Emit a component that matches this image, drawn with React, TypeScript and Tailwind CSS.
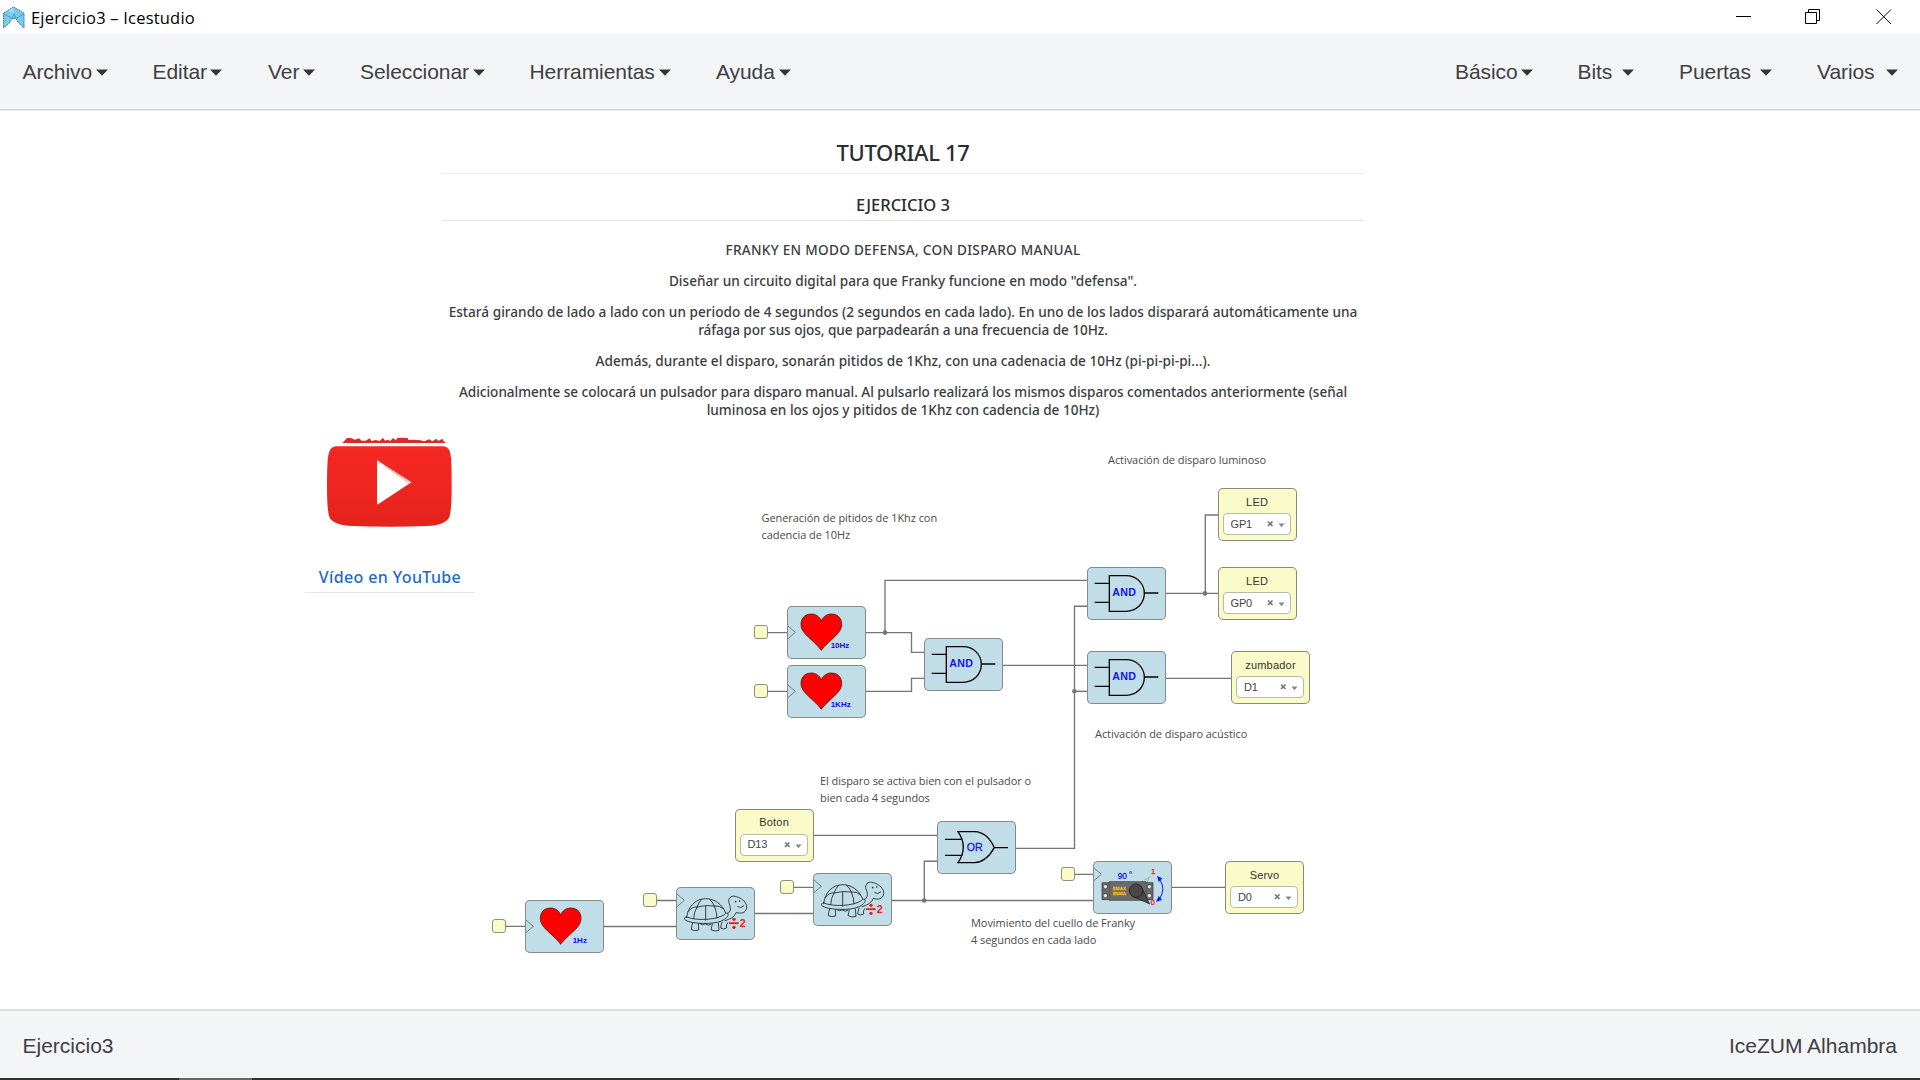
import type { ReactNode } from "react";

/* The canvas starts below the title bar and the menu bar. */
const CANVAS_TOP = 110;

function at(x: number, y: number) {
  return { left: x, top: y - CANVAS_TOP };
}

function Caret() {
  return (
    <svg className="mt-px h-[7px] w-3 shrink-0" viewBox="0 0 12 7">
      <path d="M0 0.5H12L6 6.7Z" fill="#333537" />
    </svg>
  );
}

function MenuItem({ label, className }: { label: string; className: string }) {
  return (
    <button className={`flex shrink-0 items-center justify-between whitespace-nowrap ${className}`}>
      <span>{label}</span>
      <Caret />
    </button>
  );
}

function TitleBar() {
  return (
    <header className="flex h-[34px] shrink-0 items-center bg-white pl-[3px]">
      <svg className="mt-[1px] h-[23px] w-[22px]" viewBox="0 0 23 24">
        <path d="M0.5 7.5 L11 1 L22 7.5 V23 L16.5 18 L13.5 13 H9.5 L6.5 18 L0.5 23Z" fill="#7ccbee" stroke="#2c6f8e" strokeWidth="0.9" strokeDasharray="2 0.6" />
        <path d="M0.5 8 L9.5 13 L11.5 8 L13.5 13 L22 8" fill="none" stroke="#4496ba" strokeWidth="0.9" />
        <path d="M11 1.5 L5.5 5 L11.5 8Z" fill="#9cdcf6" />
      </svg>
      <span className="ml-[6px] mt-[2px] font-['Open_Sans'] text-[16.5px] tracking-[0.2px] text-black">Ejercicio3 – Icestudio</span>
      <svg className="ml-auto mr-7 h-4 w-[157px]" viewBox="0 0 157 16" fill="none" stroke="#000" strokeWidth="1">
        <path d="M1 7.5H16" />
        <path d="M70.500 3.500H81.500V14.500H70.500ZM73.500 3.500V0.500H84.500V11.500H81.500" />
        <path d="M141.500 0.500L156 15M156 0.500L141.500 15" />
      </svg>
    </header>
  );
}

function MenuBar() {
  return (
    <nav className="flex h-[76px] shrink-0 items-center border-b border-[#d3d6d9] bg-[#f4f5f7] pl-[22.5px] pr-[22px] text-[21px] tracking-[-0.07px] text-[#3d4043] shadow-[0_1px_0_#e9eaeb]">
      <MenuItem label="Archivo" className="w-[85.5px]" />
      <MenuItem label="Editar" className="ml-[44.5px] w-[69.5px]" />
      <MenuItem label="Ver" className="ml-[46px] w-[47px]" />
      <MenuItem label="Seleccionar" className="ml-[45px] w-[125px]" />
      <MenuItem label="Herramientas" className="ml-[44.5px] w-[141px]" />
      <MenuItem label="Ayuda" className="ml-[45.5px] w-[74.5px]" />
      <div className="ml-auto flex">
        <MenuItem label="Básico" className="w-[78px]" />
        <MenuItem label="Bits" className="ml-[44.5px] w-[56.5px]" />
        <MenuItem label="Puertas" className="ml-[45px] w-[93px]" />
        <MenuItem label="Varios" className="ml-[45px] w-[81px]" />
      </div>
    </nav>
  );
}

function Info() {
  return (
    <section className="absolute left-[442px] top-[28px] flex w-[922px] flex-col text-center font-['Noto_Sans'] text-[13.6px] font-medium leading-[18px] text-[#3a3d3f]">
      <h1 className="h-[36px] border-b border-[#ededed] text-[22px] leading-[28px] tracking-[-0.3px] text-[#2a2c2e]">TUTORIAL 17</h1>
      <h2 className="mt-[19px] h-[28px] border-b border-[#e6e6e6] text-[16.5px] leading-[23px] text-[#2a2c2e]">EJERCICIO 3</h2>
      <p className="mt-[20px] tracking-[0.28px]">FRANKY EN MODO DEFENSA, CON DISPARO MANUAL</p>
      <p className="mt-[13px] tracking-[0.02px]">Diseñar un circuito digital para que Franky funcione en modo "defensa".</p>
      <p className="mt-[13px] tracking-[0.018px]">
        Estará girando de lado a lado con un periodo de 4 segundos (2 segundos en cada lado). En uno de los lados disparará automáticamente una
        <br />
        <span className="tracking-[-0.06px]">ráfaga por sus ojos, que parpadearán a una frecuencia de 10Hz.</span>
      </p>
      <p className="mt-[13px] tracking-[0.02px]">Además, durante el disparo, sonarán pitidos de 1Khz, con una cadenacia de 10Hz (pi-pi-pi-pi...).</p>
      <p className="mt-[13px]">
        <span className="tracking-[-0.038px]">
          Adicionalmente se colocará un pulsador para disparo manual. Al pulsarlo realizará los mismos disparos comentados anteriormente (señal
        </span>
        <br />
        <span className="tracking-[-0.01px]">luminosa en los ojos y pitidos de 1Khz con cadencia de 10Hz)</span>
      </p>
    </section>
  );
}

function VideoLink() {
  return (
    <section className="absolute left-[305px] top-[325px] flex w-[170px] flex-col items-center border-b border-[#e6e6e6]">
      <svg className="h-[94px] w-[126px]" viewBox="0 0 378 282">
        <defs>
          <linearGradient id="yt" x1="0" y1="0" x2="0" y2="1">
            <stop offset="0" stopColor="#f72723" />
            <stop offset="1" stopColor="#e4231d" />
          </linearGradient>
        </defs>
        <path d="M46 24 L60 9 L72 9 L84 14 L96 10 L104 17 L116 17 L128 10 L134 18 L146 15 L158 18 L168 8 L174 17 L182 14 L190 18 L198 9 L206 16 L212 8 L242 9 L244 15 L262 14 L280 16 L292 19 L306 13 L316 19 L328 11 L334 18 L346 11 L352 21 L358 24Z" fill="#dc2a27" />
        <path d="M26 34 H350 Q368 36 371 60 Q374 80 374 155 Q374 230 366 248 Q354 270 300 273 Q190 278 76 273 Q20 270 8 248 Q0 230 0 155 Q0 80 4 60 Q8 36 26 34Z" fill="url(#yt)" />
        <path d="M150 75 L254 142 L244 147 L188 103Z" fill="#f0c6c3" />
        <path d="M150 75 L242 144 L253 142 L150 210Z" fill="#fff" />
      </svg>
      <a className="mt-[35px] h-[28px] font-['Noto_Sans'] text-[16px] font-medium leading-[27px] tracking-[0.38px] text-[#1a6cc4]">Vídeo en YouTube</a>
    </section>
  );
}

/* Wires between ports, as SVG paths in window coordinates. */
const WIRES = [
  "M767 632.600H787M767 691.300H787M656 900.500H677M794 887.300H813M506 926.400H525M1075 874.300H1093",
  "M866 632.600H911.500V652.400H924",
  "M885 632.600V580.300H1087",
  "M866 691.300H911.500V678.300H924",
  "M1002 665.300H1087",
  "M1087 606.200H1074.500V848.300H1016",
  "M1074.500 691.300H1087",
  "M1166 593.400H1218",
  "M1205.300 593.400V515H1218",
  "M1166 678.400H1231",
  "M813 835.300H937",
  "M937 861.200H924.300V900.500",
  "M891 900.500H1093",
  "M755 913.500H813",
  "M603 926.500H676",
  "M1172 887.400H1225",
];
const JUNCTIONS = [
  [885, 632.6],
  [1205, 593.4],
  [1074.4, 691.3],
  [924.2, 900.5],
];

function Wires() {
  return (
    <svg className="absolute inset-0 h-[899px] w-[1920px]" viewBox="0 110 1920 899">
      {WIRES.map((d) => (
        <path key={d} d={d} fill="none" stroke="#757575" strokeWidth="1.35" />
      ))}
      {JUNCTIONS.map(([x, y]) => (
        <circle key={`${x}-${y}`} cx={x} cy={y} r="2.3" fill="#757575" />
      ))}
    </svg>
  );
}

const SOCKETS = [
  [753.6, 625.3],
  [753.6, 684],
  [642.6, 893.3],
  [780.2, 880.2],
  [492.2, 919.4],
  [1061, 867.2],
];

function Chevron({ y }: { y: number }) {
  return <path d={`M2 ${y - 19}L24 ${y}L2 ${y + 19}`} fill="none" stroke="#6f7f87" strokeWidth="3" />;
}

function Heart({ label, x = 130, y = 126, dx = 0 }: { label: string; x?: number; y?: number; dx?: number }) {
  return (
    <>
      <Chevron y={78} />
      <path transform={`translate(${dx} 0)`} d="M102 44 C96 28 82 22 70 23 C50 24 40 38 41 57 C42 78 66 94 82 110 Q94 121 102 132 Q110 121 122 110 C138 94 162 78 163 57 C164 38 154 24 134 23 C122 22 108 28 102 44Z" fill="#fe0000" stroke="#3a1010" strokeWidth="2" />
      <text x={x} y={y} fontSize="24" fontWeight="bold" fill="#0a0af0">
        {label}
      </text>
    </>
  );
}

function And() {
  return (
    <>
      <path d="M22 48H66M22 105H66M170 77H213M66 25H116C148 25 171 49 171 78C171 108 148 132 116 132H66Z" fill="none" stroke="#050505" strokeWidth="4" />
      <text x="75" y="87" fontSize="32" fontWeight="bold" fill="#1414ee" textLength="71">
        AND
      </text>
    </>
  );
}

function Or() {
  return (
    <>
      <path d="M23 54H76M23 102H76M171 79H212M62 31H112C140 32 160 55 171 79C158 102 138 123 112 124H62Q94 78 62 31Z" fill="none" stroke="#050505" strokeWidth="4" />
      <text x="88" y="90" fontSize="32" fill="#1414ee" stroke="#1414ee" strokeWidth="0.8">
        OR
      </text>
    </>
  );
}

function Turtle() {
  return (
    <>
      <Chevron y={39} />
      <g fill="none" stroke="#1c2b33" strokeWidth="2.6" strokeLinejoin="round" strokeLinecap="round">
        <path d="M31 89C36 54 60 34 88 34C114 34 138 50 148 77" />
        <path d="M31 89C24 88 22 94 28 99C48 110 110 112 135 101C148 95 158 86 155 79C152 75 148 78 144 82C122 97 62 102 31 89Z" />
        <path d="M36 72Q50 56 62 59Q88 52 114 56Q130 54 141 64M62 59Q52 76 52 94M88 56V99M114 56Q122 74 122 92M62 59Q68 43 76 36M114 56Q108 42 100 36" />
        <path d="M155 78C170 66 158 52 157 42C157 28 168 24 180 28C198 33 212 46 211 60C210 78 192 80 180 75C176 84 170 91 157 96L146 100" />
        <path d="M49 107Q46 114 45 127Q54 132 67 128L66 109M108 110Q106 118 104 127Q116 134 128 129L126 107M137 104Q134 114 133 122Q142 128 151 122Q148 112 154 106M72 110Q78 115 86 110M88 111Q96 116 104 111" />
        <path d="M184 58Q192 65 202 56" />
      </g>
      <circle cx="178" cy="43" r="2.4" fill="#1c2b33" />
      <circle cx="190" cy="41" r="2.4" fill="#1c2b33" />
      <path d="M158 107.500H187" stroke="#f01818" strokeWidth="5.5" />
      <circle cx="173" cy="96" r="5" fill="#f01818" />
      <circle cx="173" cy="120" r="5" fill="#f01818" />
      <text x="190" y="119" fontSize="32" fontWeight="bold" fill="#f01818">
        2
      </text>
    </>
  );
}

function Servo() {
  return (
    <>
      <Chevron y={39} />
      <path d="M26 64H48V61H158V64H179V115H158V117H48V115H26Z" fill="#6a6a6a" stroke="#333" strokeWidth="2" />
      <path d="M48 64V115M158 64V115" stroke="#444" strokeWidth="1.500" />
      {[
        [36, 76],
        [36, 103],
        [168, 76],
        [168, 103],
      ].map(([cx, cy]) => (
        <circle key={`${cx}-${cy}`} cx={cx} cy={cy} r="6" fill="#eef4f6" stroke="#222" strokeWidth="1.500" />
      ))}
      <g fontSize="13" fontWeight="bold" fill="#f2b81a" stroke="#f2b81a" strokeWidth="0.8">
        <text x="58" y="87" textLength="40">EMAX</text>
        <text x="58" y="101" textLength="40">ES08A</text>
      </g>
      <path d="M143 62L172 45M160 66L168 48" stroke="#444" strokeWidth="2" strokeDasharray="2 3" />
      <path d="M144 76L169 128L118 105Z" fill="#484848" stroke="#1c1c1c" strokeWidth="2" />
      <circle cx="128" cy="88" r="20" fill="#484848" stroke="#1c1c1c" strokeWidth="2.5" />
      <text x="73" y="53" fontSize="25" fill="#1616ee" stroke="#1616ee" strokeWidth="0.8">90</text>
      <text x="107" y="39" fontSize="15" fontWeight="bold" fill="#1616ee">o</text>
      <g fontSize="22" fill="#e8232c" stroke="#e8232c" strokeWidth="0.8">
        <text x="174" y="38">1</text>
        <text x="172" y="132">0</text>
      </g>
      <path d="M199 54Q218 82 199 112" fill="none" stroke="#1616ee" strokeWidth="3" />
      <path d="M191 44L207 51L196 62ZM188 122L196 104L206 115Z" fill="#1616ee" />
    </>
  );
}

const BLOCKS: { x: number; y: number; art: ReactNode }[] = [
  { x: 787, y: 606, art: <Heart label="10Hz" /> },
  { x: 787, y: 665, art: <Heart label="1KHz" y={124} /> },
  { x: 525, y: 900, art: <Heart label="1Hz" x={142} y={128} dx={4} /> },
  { x: 924, y: 637.6, art: <And /> },
  { x: 1087, y: 567, art: <And /> },
  { x: 1087, y: 651, art: <And /> },
  { x: 937, y: 820.6, art: <Or /> },
  { x: 676, y: 886.6, art: <Turtle /> },
  { x: 813, y: 873, art: <Turtle /> },
  { x: 1093, y: 861, art: <Servo /> },
];

const PINS = [
  { x: 1217.6, y: 488, name: "LED", pin: "GP1" },
  { x: 1217.6, y: 567, name: "LED", pin: "GP0" },
  { x: 1231, y: 651, name: "zumbador", pin: "D1" },
  { x: 734.6, y: 808.6, name: "Boton", pin: "D13" },
  { x: 1225, y: 861, name: "Servo", pin: "D0" },
];

const NOTES = [
  { x: 1108, y: 451, lines: ["Activación de disparo luminoso"] },
  { x: 761.5, y: 509, lines: ["Generación de pitidos de 1Khz con", "cadencia de 10Hz"] },
  { x: 1095, y: 725, lines: ["Activación de disparo acústico"] },
  { x: 820, y: 772, lines: ["El disparo se activa bien con el pulsador o", "bien cada 4 segundos"] },
  { x: 971, y: 914, lines: ["Movimiento del cuello de Franky", "4 segundos en cada lado"] },
];

function PinBlock({ name, pin }: { name: string; pin: string }) {
  return (
    <>
      <span className="mt-[5.500px] text-[11px] leading-[16px] tracking-[0.2px] text-[#333]">{name}</span>
      <div className="mr-px mt-[3.500px] flex h-[22px] w-[68px] items-center rounded-[4px] border border-[#b9b9a8] bg-white pl-[7px] pr-[5px] text-[11px] tracking-[-0.2px] text-[#444]">
        <span>{pin}</span>
        <svg className="ml-auto h-2 w-[19px]" viewBox="0 0 19 8">
          <path d="M2 1.500L6.500 6M6.500 1.500L2 6" stroke="#777" strokeWidth="1.700" />
          <path d="M12.500 3.500H18.500L15.500 7.200Z" fill="#888" />
        </svg>
      </div>
    </>
  );
}

function Canvas() {
  return (
    <main className="relative flex-1">
      <Info />
      <VideoLink />
      <Wires />
      {SOCKETS.map(([x, y]) => (
        <div key={`${x}-${y}`} className="absolute size-[14px] rounded-[3px] border border-[#8f8f80] bg-[#fbfbc9]" style={at(x, y)} />
      ))}
      {BLOCKS.map(({ x, y, art }) => (
        <div key={`${x}-${y}`} className="absolute h-[53px] w-[79px] rounded-[5px] bg-[#c0dde8] ring-1 ring-inset ring-[#858a8d]" style={at(x, y)}>
          <svg className="h-full w-full" viewBox="0 0 237 159" fontFamily="Liberation Sans">
            <g transform="translate(1 1)">{art}</g>
          </svg>
        </div>
      ))}
      {PINS.map(({ x, y, name, pin }) => (
        <div key={`${x}-${y}`} className="absolute flex h-[53px] w-[79px] flex-col items-center rounded-[5px] bg-[#fbfbc9] ring-1 ring-inset ring-[#8a8a7c]" style={at(x, y)}>
          <PinBlock name={name} pin={pin} />
        </div>
      ))}
      {NOTES.map(({ x, y, lines }) => (
        <div key={`${x}-${y}`} className="absolute whitespace-nowrap font-['Open_Sans'] text-[11px] leading-[17px] tracking-[-0.06px] text-[#4a4a4a]" style={at(x, y)}>
          {lines.map((line) => (
            <p key={line}>{line}</p>
          ))}
        </div>
      ))}
    </main>
  );
}

function StatusBar() {
  return (
    <>
      <footer className="flex h-[69px] shrink-0 items-center justify-between border-t-2 border-[#dcddde] bg-[#f4f5f7] pl-[22.500px] pr-[23px] pt-[2px] text-[21px] text-[#3d4043]">
        <span>Ejercicio3</span>
        <span>IceZUM Alhambra</span>
      </footer>
      <div className="flex h-[2px] shrink-0 bg-[#323336] pl-[179px]">
        <div className="w-[73px] bg-[#66676a]" />
      </div>
    </>
  );
}

export default function App() {
  return (
    <div className="flex h-[1080px] w-[1920px] flex-col overflow-hidden bg-white font-['Liberation_Sans',sans-serif]">
      <TitleBar />
      <MenuBar />
      <Canvas />
      <StatusBar />
    </div>
  );
}
